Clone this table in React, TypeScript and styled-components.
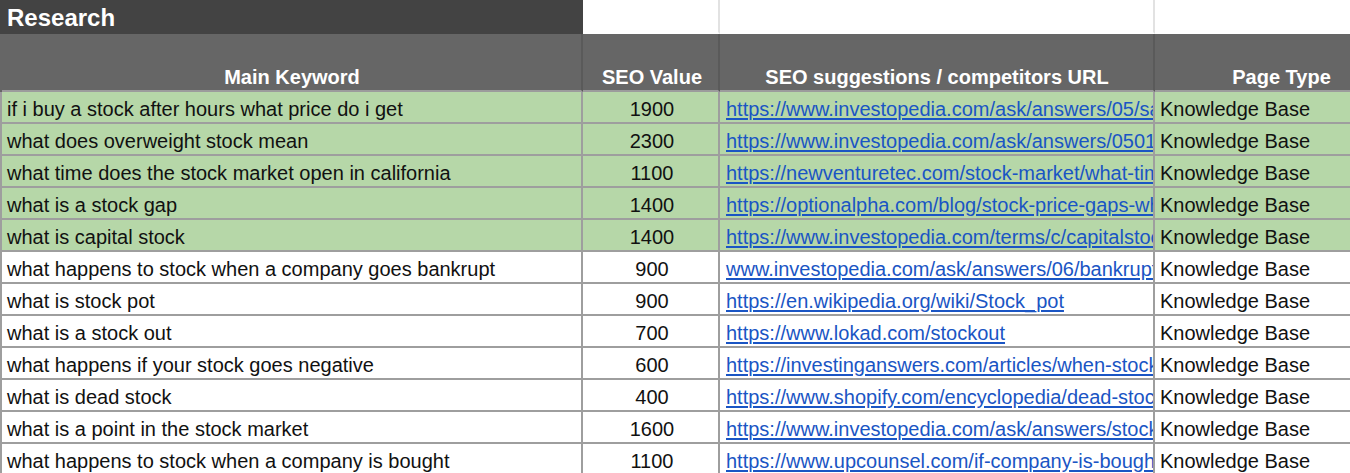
import { createGlobalStyle, css } from 'styled-components';
import styled from 'styled-components';

const GlobalStyle = createGlobalStyle`
  html, body {
    margin: 0;
    padding: 0;
    background: #ffffff;
    overflow: hidden;
  }
  body {
    font-family: 'Liberation Sans', Arial, sans-serif;
  }
`;

type Tone = 'title' | 'head' | 'green' | 'plain' | 'blank';

const tones = {
  title: css`
    background: #434343;
    color: #ffffff;
    font-weight: 700;
    font-size: 24px;
    border-right-color: #434343;
    border-bottom-color: #434343;
  `,
  head: css`
    background: #666666;
    color: #ffffff;
    font-weight: 700;
    border-right-color: #5a5a5a;
    border-bottom-color: #9c9c9c;
  `,
  green: css`
    background: #b6d7a8;
    color: #111111;
    border-right-color: #9e9e9e;
    border-bottom-color: #9e9e9e;
  `,
  plain: css`
    background: #ffffff;
    color: #111111;
    border-right-color: #9e9e9e;
    border-bottom-color: #9e9e9e;
  `,
  blank: css`
    background: #ffffff;
    border-right-color: #e2e2e2;
    border-bottom-color: #ffffff;
  `,
};

const Sheet = styled.div`
  display: flex;
  flex-direction: column;
  width: 1412px;
`;

const Row = styled.div<{ $height: number; $edge: string }>`
  display: grid;
  grid-template-columns: 581px 137px 435px 254px;
  height: ${(p) => p.$height}px;
  border-left: 2px solid ${(p) => p.$edge};
`;

const Cell = styled.div<{ $tone: Tone; $align?: 'left' | 'center'; $valign?: 'center' | 'bottom' }>`
  display: flex;
  align-items: ${(p) => (p.$valign === 'bottom' ? 'flex-end' : 'center')};
  justify-content: ${(p) => (p.$align === 'center' ? 'center' : 'flex-start')};
  box-sizing: border-box;
  min-width: 0;
  padding: ${(p) => (p.$valign === 'bottom' ? '0 4px 3px 5px' : '3px 4px 0 5px')};
  border-right: 2px solid;
  border-bottom: 2px solid;
  font-size: 20px;
  line-height: 1;
  white-space: nowrap;
  overflow: hidden;
  ${(p) => tones[p.$tone]}
`;

const NumberCell = styled(Cell)`
  padding-left: 7px;
`;

const UrlCell = styled(Cell)`
  padding-left: 6px;
  padding-right: 0;
`;

const Url = styled.a`
  color: #1a55c4;
  text-decoration: underline;
  text-underline-offset: 2px;
  white-space: nowrap;
`;

const rows = [
  ['if i buy a stock after hours what price do i get', '1900', 'https://www.investopedia.com/ask/answers/05/saleafterhours.asp', true],
  ['what does overweight stock mean', '2300', 'https://www.investopedia.com/ask/answers/050115/what-does-overweight-mean.asp', true],
  ['what time does the stock market open in california', '1100', 'https://newventuretec.com/stock-market/what-time-does-the-stock-market-open/', true],
  ['what is a stock gap', '1400', 'https://optionalpha.com/blog/stock-price-gaps-what-they-are', true],
  ['what is capital stock', '1400', 'https://www.investopedia.com/terms/c/capitalstock.asp', true],
  ['what happens to stock when a company goes bankrupt', '900', 'www.investopedia.com/ask/answers/06/bankruptcompany.asp', false],
  ['what is stock pot', '900', 'https://en.wikipedia.org/wiki/Stock_pot', false],
  ['what is a stock out', '700', 'https://www.lokad.com/stockout', false],
  ['what happens if your stock goes negative', '600', 'https://investinganswers.com/articles/when-stock-goes-negative', false],
  ['what is dead stock', '400', 'https://www.shopify.com/encyclopedia/dead-stock', false],
  ['what is a point in the stock market', '1600', 'https://www.investopedia.com/ask/answers/stock-market-points.asp', false],
  ['what happens to stock when a company is bought', '1100', 'https://www.upcounsel.com/if-company-is-bought-what-happens-to-stock', false],
] as const;

export default function App() {
  return (
    <>
      <GlobalStyle />
      <Sheet>
        {/* title row */}
        <Row $height={34} $edge="#434343">
          <Cell $tone="title">Research</Cell>
          <Cell $tone="blank" />
          <Cell $tone="blank" />
          <Cell $tone="blank" />
        </Row>

        {/* column headers */}
        <Row $height={58} $edge="#666666">
          <Cell $tone="head" $align="center" $valign="bottom">Main Keyword</Cell>
          <NumberCell $tone="head" $align="center" $valign="bottom">SEO Value</NumberCell>
          <Cell $tone="head" $align="center" $valign="bottom">SEO suggestions / competitors URL</Cell>
          <Cell $tone="head" $align="center" $valign="bottom">Page Type</Cell>
        </Row>

        {rows.map(([keyword, value, url, done]) => {
          const tone: Tone = done ? 'green' : 'plain';
          return (
            <Row key={keyword} $height={32} $edge="#9e9e9e">
              <Cell $tone={tone}>{keyword}</Cell>
              <NumberCell $tone={tone} $align="center">{value}</NumberCell>
              <UrlCell $tone={tone}>
                <Url href={url.startsWith('http') ? url : `http://${url}`}>{url}</Url>
              </UrlCell>
              <Cell $tone={tone}>Knowledge Base</Cell>
            </Row>
          );
        })}
      </Sheet>
    </>
  );
}
